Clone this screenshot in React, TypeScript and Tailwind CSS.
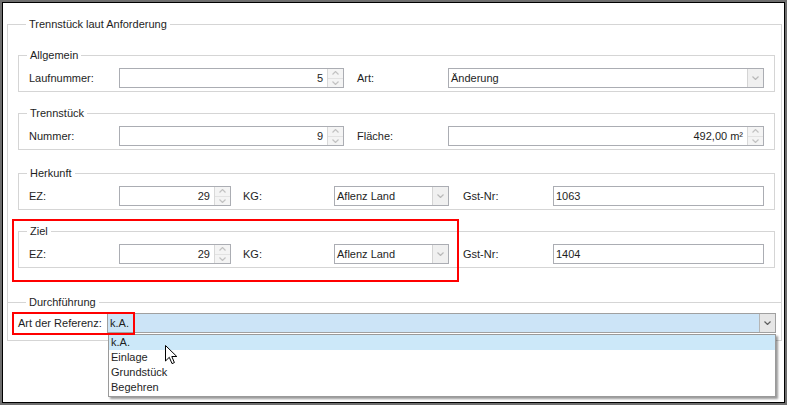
import React from 'react';

// Windows-Forms-like "Trennstück" dialog with an open combobox

const font = "font-['Liberation_Sans',Arial,sans-serif]";

function Chevron({ up = false, color = '#c2c2c2' }: { up?: boolean; color?: string }) {
  return (
    <svg width="7" height="4" viewBox="0 0 7 4" className="block">
      <path d={up ? 'M0.5 3.5 L3.5 0.5 L6.5 3.5' : 'M0.5 0.5 L3.5 3.5 L6.5 0.5'} fill="none" stroke={color} strokeWidth="1.2" />
    </svg>
  );
}

function NumberField({ value, width }: { value: string; width: string }) {
  return (
    <div className={`flex h-[20px] ${width} border border-[#abadb3] bg-white`}>
      <div className="flex-1 flex items-center justify-end pr-[4px] text-[#1e1e1e]">{value}</div>
      <div className="flex w-[16px] flex-col border-l border-[#d9d9d9] bg-[#f4f4f4]">
        <div className="flex flex-1 items-center justify-center border-b border-[#e2e2e2]">
          <Chevron up />
        </div>
        <div className="flex flex-1 items-center justify-center">
          <Chevron />
        </div>
      </div>
    </div>
  );
}

function ComboField({ value, width }: { value: string; width: string }) {
  return (
    <div className={`flex h-[20px] ${width} border border-[#abadb3] bg-white`}>
      <div className="flex-1 flex items-center pl-[2px] text-[#1e1e1e]">{value}</div>
      <div className="flex w-[16px] items-center justify-center border-l border-[#d4d4d4] bg-[#f0f0f0]">
        <Chevron color="#b9b9b9" />
      </div>
    </div>
  );
}

function TextField({ value, width }: { value: string; width: string }) {
  return (
    <div className={`flex h-[20px] ${width} items-center border border-[#abadb3] bg-white pl-[2px] text-[#1e1e1e]`}>
      {value}
    </div>
  );
}

function Group({ title, className = '', children }: { title: string; className?: string; children: React.ReactNode }) {
  return (
    <fieldset className={`border border-[#d5d5d5] ${className}`}>
      <legend className="ml-[8px] px-[3px] leading-[14px] text-[#1e1e1e]">{title}</legend>
      {children}
    </fieldset>
  );
}

function Label({ text, width }: { text: string; width: string }) {
  return <div className={`${width} shrink-0 text-[#1e1e1e]`}>{text}</div>;
}

function OriginRow({ ez, kg, gst }: { ez: string; kg: string; gst: string }) {
  return (
    <div className="flex items-center pl-[10px] pr-[10px] pt-[6px] pb-[3px]">
      <Label text="EZ:" width="w-[90px]" />
      <NumberField value={ez} width="w-[112px]" />
      <Label text="KG:" width="ml-[12px] w-[91px]" />
      <ComboField value={kg} width="w-[115px]" />
      <Label text="Gst-Nr:" width="ml-[14px] w-[90px]" />
      <TextField value={gst} width="w-[211px]" />
    </div>
  );
}

export default function App() {
  const options = ['k.A.', 'Einlage', 'Grundstück', 'Begehren'];

  return (
    <div className={`${font} text-[11px] relative h-[405px] w-[787px] border-2 border-[#6e6e6e] bg-white`}>
      <div className="h-full w-full border border-black bg-white pt-[14px] pl-[4px] pr-[2px]">
        {/* Trennstück laut Anforderung */}
        <Group title="Trennstück laut Anforderung" className="pl-[10px] pr-[6px] pb-[34px]">
          <div className="pt-[17px]">
            <Group title="Allgemein">
              <div className="flex items-center pl-[10px] pr-[10px] pt-[6px] pb-[3px]">
                <Label text="Laufnummer:" width="w-[90px]" />
                <NumberField value="5" width="w-[225px]" />
                <Label text="Art:" width="ml-[13px] w-[91px]" />
                <ComboField value="Änderung" width="w-[316px]" />
              </div>
            </Group>

            <Group title="Trennstück" className="mt-[14px]">
              <div className="flex items-center pl-[10px] pr-[10px] pt-[6px] pb-[3px]">
                <Label text="Nummer:" width="w-[90px]" />
                <NumberField value="9" width="w-[225px]" />
                <Label text="Fläche:" width="ml-[13px] w-[91px]" />
                <NumberField value="492,00 m²" width="w-[316px]" />
              </div>
            </Group>

            <Group title="Herkunft" className="mt-[16px]">
              <OriginRow ez="29" kg="Aflenz Land" gst="1063" />
            </Group>

            <Group title="Ziel" className="mt-[14px]">
              <OriginRow ez="29" kg="Aflenz Land" gst="1404" />
            </Group>
          </div>
        </Group>

        {/* Durchführung */}
        <fieldset className="-mt-[8px] border border-[#d5d5d5] pl-[10px] pr-[5px] pt-[4px] pb-[7px]">
          <legend className="relative ml-[8px] bg-white px-[3px] leading-[14px] text-[#1e1e1e]">Durchführung</legend>
          <div className="flex items-center">
            <Label text="Art der Referenz:" width="w-[89px]" />
            <div className="flex h-[20px] w-[669px] border border-[#a0a0a0] bg-[#cce4f7]">
              <div className="flex-1 flex items-center pl-[2px] text-[#1e1e1e]">k.A.</div>
              <div className="flex w-[16px] items-center justify-center border-l border-[#b5b5b5] bg-[#e6e6e6]">
                <Chevron color="#5e5e5e" />
              </div>
            </div>
          </div>
        </fieldset>
      </div>

      {/* open dropdown list */}
      <div className="absolute left-[106px] top-[332px] w-[668px] border border-[#9a9a9a] bg-white pb-[1px] shadow-[2px_2px_2px_rgba(0,0,0,0.4)]">
        {options.map((o, i) => (
          <div
            key={o}
            className={`h-[15px] pl-[2px] leading-[15px] text-[#1e1e1e] ${i === 0 ? 'bg-[#cce8f9]' : ''}`}
          >
            {o}
          </div>
        ))}
      </div>

      {/* annotation boxes */}
      <div className="absolute left-[10px] top-[217px] h-[63px] w-[447px] border-2 border-[#ff0000]" />
      <div className="absolute left-[10px] top-[310px] h-[23px] w-[123px] border-2 border-[#ff0000]" />

      {/* mouse cursor */}
      <svg className="absolute left-[163px] top-[343px]" width="13" height="20" viewBox="0 0 13 20">
        <path d="M0.5 0.5 L0.5 16 L4.3 12.3 L7 18.6 L9.4 17.6 L6.8 11.5 L11.8 11.5 Z" fill="white" stroke="black" strokeWidth="1" />
      </svg>
    </div>
  );
}
